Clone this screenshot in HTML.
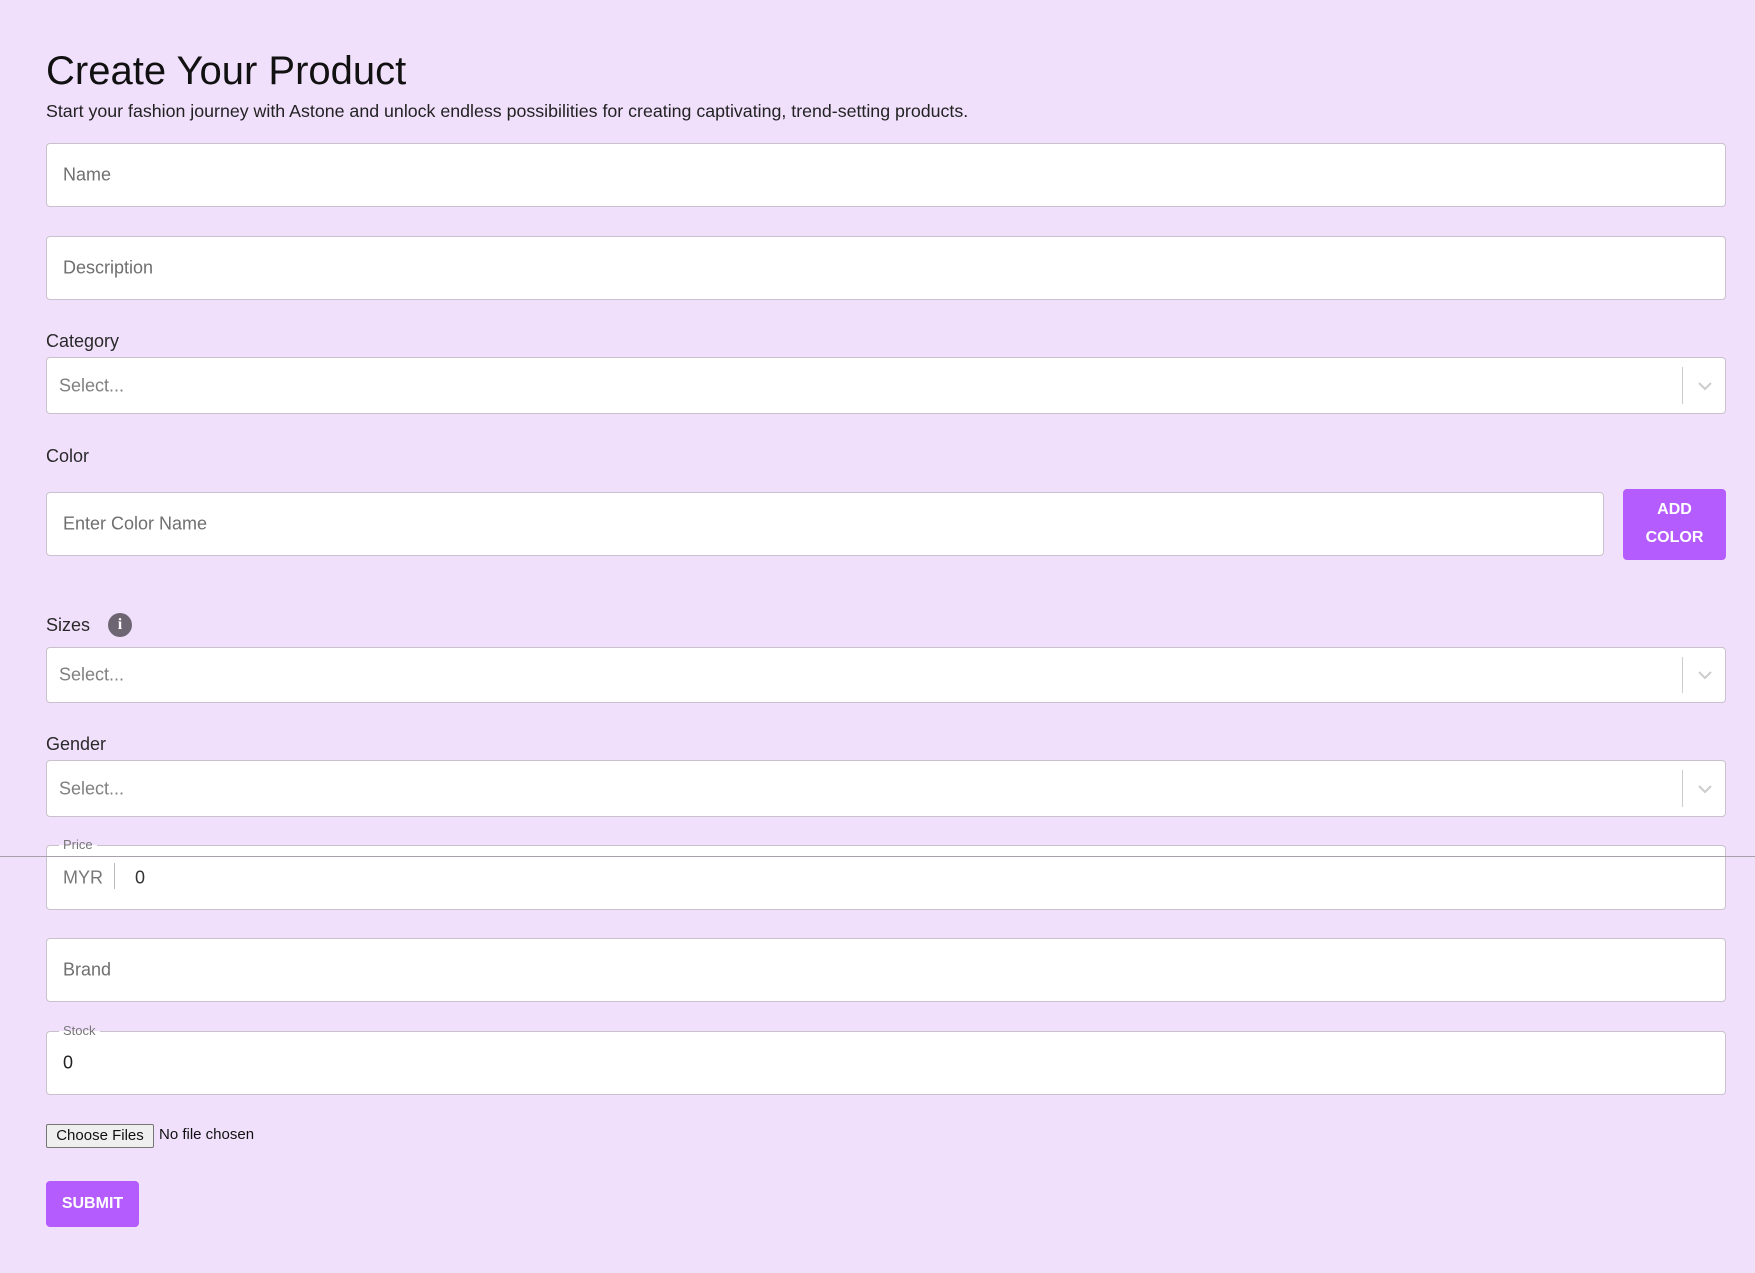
<!DOCTYPE html>
<html><head><meta charset="utf-8"><style>
*{box-sizing:border-box;margin:0;padding:0}
body{width:1755px;height:1273px;background:#f1e0fc;font-family:"Liberation Sans",sans-serif;position:relative;overflow:hidden;color:#1c1b1f}
.a{position:absolute}
.box{position:absolute;left:46px;width:1680px;background:#fff;border:1px solid #c9c2cc;border-radius:4px}
.ph{position:absolute;left:16px;top:50%;transform:translateY(-50%);font-size:18px;color:#6f6f6f}
.sel .ph{left:12px;color:#808080;font-size:18px}
.sep{position:absolute;right:42px;top:9px;bottom:9px;width:1px;background:#ccc}
.chev{position:absolute;right:12px;top:50%;transform:translateY(-50%)}
.lbl{position:absolute;left:46px;font-size:18px;color:#2a2a2a}
.btn{position:absolute;background:#b55cff;color:#fff;border-radius:4px;text-align:center;font-weight:bold;font-size:16px}
.leg{position:absolute;font-size:13px;color:#777;padding:0 4px;left:12px;top:-9px;line-height:16px;background:linear-gradient(#f1e0fc 50%,#fff 50%)}
</style></head><body>
<div class="a" style="left:46px;top:49px;font-size:40px;color:#111">Create Your Product</div>
<div class="a" style="left:46px;top:101px;font-size:17.8px;color:#222">Start your fashion journey with Astone and unlock endless possibilities for creating captivating, trend-setting products.</div>

<div class="box" style="top:143px;height:64px"><span class="ph">Name</span></div>
<div class="box" style="top:236px;height:64px"><span class="ph">Description</span></div>

<div class="lbl" style="top:331px">Category</div>
<div class="box sel" style="top:357px;height:57px"><span class="ph">Select...</span><div class="sep"></div><svg class="chev" width="16" height="10" viewBox="0 0 16 10"><path d="M2 2l6 6 6-6" fill="none" stroke="#ccc" stroke-width="2"/></svg></div>

<div class="lbl" style="top:446px">Color</div>
<div class="box" style="top:492px;height:64px;width:1558px"><span class="ph">Enter Color Name</span></div>
<div class="btn" style="left:1623px;top:489px;width:103px;height:71px;line-height:28px;padding-top:7px">ADD<br>COLOR</div>

<div class="lbl" style="top:615px">Sizes</div>
<div class="a" style="left:108px;top:613px;width:24px;height:24px;border-radius:50%;background:#6e6573;color:#fff;font-weight:bold;font-size:16px;text-align:center;line-height:24px;font-family:'Liberation Serif',serif">i</div>
<div class="box sel" style="top:647px;height:56px"><span class="ph">Select...</span><div class="sep"></div><svg class="chev" width="16" height="10" viewBox="0 0 16 10"><path d="M2 2l6 6 6-6" fill="none" stroke="#ccc" stroke-width="2"/></svg></div>

<div class="lbl" style="top:734px">Gender</div>
<div class="box sel" style="top:760px;height:57px"><span class="ph">Select...</span><div class="sep"></div><svg class="chev" width="16" height="10" viewBox="0 0 16 10"><path d="M2 2l6 6 6-6" fill="none" stroke="#ccc" stroke-width="2"/></svg></div>

<div class="box" style="top:845px;height:65px"><span class="leg">Price</span>
<span class="ph" style="color:#777">MYR</span><div class="a" style="left:67px;top:17px;width:1px;height:26px;background:#bbb"></div><span class="ph" style="left:88px;color:#333">0</span></div>
<div class="a" style="left:0;top:856px;width:1755px;height:1px;background:#a8a0ab"></div>

<div class="box" style="top:938px;height:64px"><span class="ph">Brand</span></div>
<div class="box" style="top:1031px;height:64px"><span class="leg">Stock</span><span class="ph" style="color:#222">0</span></div>

<div class="a" style="left:46px;top:1124px;width:108px;height:24px;background:#efefef;border:1px solid #767676;border-radius:2px;font-size:15px;text-align:center;line-height:22px;color:#111">Choose Files</div>
<div class="a" style="left:159px;top:1126px;font-size:15px;color:#111">No file chosen</div>

<div class="btn" style="left:46px;top:1181px;width:93px;height:46px;line-height:46px;font-size:16px">SUBMIT</div>
</body></html>
